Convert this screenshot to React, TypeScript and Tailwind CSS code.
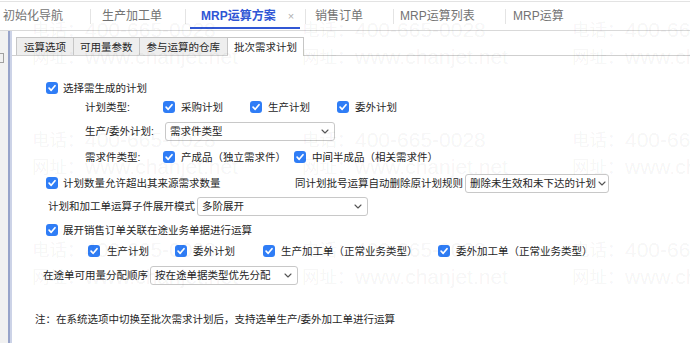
import React from "react";

const Cb = () => (
  <span className="w-[12px] h-[12px] rounded-[3px] bg-[#2f7df6] flex items-center justify-center shrink-0">
    <svg width="10" height="10" viewBox="0 0 10 10">
      <path d="M2.1 5.2 L4.2 7.3 L8 2.7" stroke="white" strokeWidth="1.7" fill="none" strokeLinecap="round" strokeLinejoin="round" />
    </svg>
  </span>
);

const Sel = ({ text, w }: { text: string; w: string }) => (
  <div className={`${w} h-[19px] border border-[#c8c8c8] rounded-[3px] bg-white flex items-center justify-between pl-[4px] pr-[5px] shrink-0 overflow-hidden`}>
    <span className="whitespace-nowrap">{text}</span>
    <svg width="8" height="5" viewBox="0 0 8 5" className="shrink-0 ml-[2px]">
      <path d="M1 1 L4 4 L7 1" stroke="#555" strokeWidth="1.1" fill="none" strokeLinecap="round" strokeLinejoin="round" />
    </svg>
  </div>
);

const Item = ({ text, w, ml = "ml-[6px]" }: { text: string; w?: string; ml?: string }) => (
  <div className={`flex items-center shrink-0 ${w ?? ""}`}>
    <Cb />
    <span className={`${ml} whitespace-nowrap`}>{text}</span>
  </div>
);

const marks = [
  { top: "top-[18px]", left: "left-[32px]", k: "tel" },
  { top: "top-[18px]", left: "left-[302px]", k: "tel" },
  { top: "top-[18px]", left: "left-[572px]", k: "tel" },
  { top: "top-[45px]", left: "left-[32px]", k: "web" },
  { top: "top-[45px]", left: "left-[302px]", k: "web" },
  { top: "top-[45px]", left: "left-[572px]", k: "web" },
  { top: "top-[128px]", left: "left-[32px]", k: "tel" },
  { top: "top-[128px]", left: "left-[302px]", k: "tel" },
  { top: "top-[128px]", left: "left-[572px]", k: "tel" },
  { top: "top-[155px]", left: "left-[32px]", k: "web" },
  { top: "top-[155px]", left: "left-[302px]", k: "web" },
  { top: "top-[155px]", left: "left-[572px]", k: "web" },
  { top: "top-[238px]", left: "left-[32px]", k: "tel" },
  { top: "top-[238px]", left: "left-[302px]", k: "tel" },
  { top: "top-[238px]", left: "left-[572px]", k: "tel" },
  { top: "top-[265px]", left: "left-[32px]", k: "web" },
  { top: "top-[265px]", left: "left-[302px]", k: "web" },
  { top: "top-[265px]", left: "left-[572px]", k: "web" },
];

export default function App() {
  return (
    <div className="relative w-[690px] h-[343px] overflow-hidden bg-white text-[#262626] font-['Liberation_Sans','Noto_Sans_CJK_SC',sans-serif]">
      {/* top tabs */}
      <div className="h-[31px] pt-[1px] border-b border-[#d9d9d9]">
        <div className="h-full border-t border-[#e3e3e3] flex items-center text-[12px] text-[#737373]">
          <div className="w-[90px] pl-[3px] shrink-0">初始化导航</div>
          <div className="w-px h-[15px] bg-[#e4e4e4]" />
          <div className="w-[94px] pl-[11px] shrink-0">生产加工单</div>
          <div className="w-px h-[15px] bg-[#e4e4e4]" />
          <div className="relative w-[119px] h-full pl-[15px] flex items-center shrink-0">
            <span className="font-bold text-[#2f56d5]">MRP运算方案</span>
            <span className="ml-[12px] text-[11px] text-[#b0b0b0]">×</span>
            <div className="absolute left-[4px] right-[5px] bottom-[1px] h-[2px] bg-[#3157d4]" />
          </div>
          <div className="w-px h-[15px] bg-[#e4e4e4]" />
          <div className="w-[87px] pl-[9px] shrink-0">销售订单</div>
          <div className="w-px h-[15px] bg-[#e4e4e4]" />
          <div className="w-[111px] pl-[6px] shrink-0">MRP运算列表</div>
          <div className="w-px h-[15px] bg-[#e4e4e4]" />
          <div className="pl-[7px] shrink-0">MRP运算</div>
        </div>
      </div>

      <div className="flex h-[312px]">
        {/* left strip */}
        <div className="w-[8px] bg-[#f1f1f1] shrink-0 flex flex-col">
          <div className="mt-[22px] w-[4px] h-[10px] border border-l-0 border-[#a0a0a0]" />
        </div>
        <div className="w-[2px] bg-[#97a3c9] shrink-0" />
        <div className="w-[2px] bg-[#ccd3e7] shrink-0" />

        {/* main */}
        <div className="flex-1 flex flex-col text-[10.5px] leading-[18px]">
          <div className="h-[25px] border-b border-[#cfcfcf] flex items-end pl-[4px] shrink-0">
            <div className="h-[18px] px-[7px] border border-b-0 border-[#c6c6c6] bg-[#eeeeee] flex items-center">运算选项</div>
            <div className="h-[18px] px-[6px] border border-b-0 border-l-0 border-[#c6c6c6] bg-[#eeeeee] flex items-center">可用量参数</div>
            <div className="h-[18px] px-[7px] border border-b-0 border-l-0 border-[#c6c6c6] bg-[#eeeeee] flex items-center">参与运算的仓库</div>
            <div className="h-[19px] mb-[-1px] px-[6px] border border-b-0 border-l-0 border-[#c6c6c6] bg-white flex items-center">批次需求计划</div>
          </div>

          <div className="flex flex-col pt-[23px]">
            <div className="h-[18px] flex items-center pl-[34px]">
              <Item text="选择需生成的计划" ml="ml-[5px]" />
            </div>
            <div className="h-[18px] mt-[1px] flex items-center pl-[73px]">
              <span className="w-[78px] shrink-0">计划类型:</span>
              <Item text="采购计划" w="w-[87px]" />
              <Item text="生产计划" w="w-[87px]" />
              <Item text="委外计划" />
            </div>
            <div className="h-[18px] mt-[6px] flex items-center pl-[73px]">
              <span className="w-[80px] shrink-0">生产/委外计划:</span>
              <Sel text="需求件类型" w="w-[170px]" />
            </div>
            <div className="h-[18px] mt-[8px] flex items-center pl-[73px]">
              <span className="w-[78px] shrink-0">需求件类型:</span>
              <Item text="产成品（独立需求件）" w="w-[131px]" />
              <Item text="中间半成品（相关需求件）" />
            </div>
            <div className="h-[18px] mt-[8px] flex items-center pl-[34px]">
              <Item text="计划数量允许超出其来源需求数量" w="w-[249px]" ml="ml-[5px]" />
              <span className="w-[170px] shrink-0 whitespace-nowrap">同计划批号运算自动删除原计划规则</span>
              <Sel text="删除未生效和未下达的计划" w="w-[144px]" />
            </div>
            <div className="h-[18px] mt-[5px] flex items-center pl-[36px]">
              <span className="w-[149px] shrink-0 whitespace-nowrap">计划和加工单运算子件展开模式</span>
              <Sel text="多阶展开" w="w-[171px]" />
            </div>
            <div className="h-[18px] mt-[6px] flex items-center pl-[34px]">
              <Item text="展开销售订单关联在途业务单据进行运算" ml="ml-[5px]" />
            </div>
            <div className="h-[18px] mt-[3px] flex items-center pl-[76px]">
              <Item text="生产计划" w="w-[87px]" ml="ml-[7px]" />
              <Item text="委外计划" w="w-[88px]" />
              <Item text="生产加工单（正常业务类型）" w="w-[175px]" />
              <Item text="委外加工单（正常业务类型）" />
            </div>
            <div className="h-[18px] mt-[6px] flex items-center pl-[31px]">
              <span className="w-[107px] shrink-0 whitespace-nowrap">在途单可用量分配顺序</span>
              <Sel text="按在途单据类型优先分配" w="w-[148px]" />
            </div>
            <div className="h-[18px] mt-[26px] flex items-center pl-[23px] whitespace-nowrap">
              注：在系统选项中切换至批次需求计划后，支持选单生产/委外加工单进行运算
            </div>
          </div>
        </div>
      </div>

      {/* watermark overlay */}
      <div className="absolute inset-0 pointer-events-none">
        {marks.map((m, i) => (
          <div key={i} className={`absolute ${m.top} ${m.left} h-[24px] flex items-center whitespace-nowrap text-black/[0.055]`}>
            <span className="w-[53px] text-[17.5px]">{m.k === "tel" ? "电话：" : "网址："}</span>
            <span className="text-[21px]">{m.k === "tel" ? "400-665-0028" : "www.chanjet.net"}</span>
          </div>
        ))}
      </div>
    </div>
  );
}
